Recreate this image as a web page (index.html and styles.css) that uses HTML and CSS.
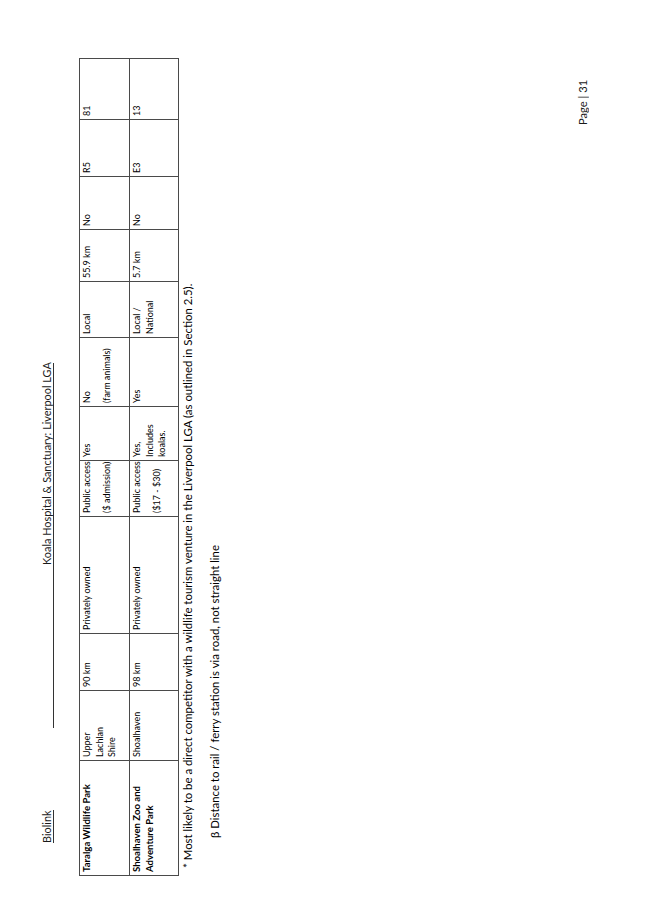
FILE: index.html
```html
<!DOCTYPE html>
<html lang="en">
<head>
<meta charset="utf-8">
<title>Biolink – Page 31</title>
<link rel="stylesheet" href="styles.css">
</head>
<body>
<div class="page">
  <header class="hdr">
    <span class="hdr-left">Biolink</span>
    <span class="hdr-right"><span class="hdr-title">Koala Hospital &amp; Sanctuary: Liverpool LGA</span></span>
  </header>

  <table class="comp">
    <colgroup>
      <col class="c1"><col class="c2"><col class="c3"><col class="c4"><col class="c5"><col class="c6">
      <col class="c7"><col class="c8"><col class="c9"><col class="c10"><col class="c11"><col class="c12">
    </colgroup>
    <tr class="r1">
      <td class="name">Taralga Wildlife Park</td>
      <td>Upper<br>Lachlan<br>Shire</td>
      <td>90 km</td>
      <td>Privately owned</td>
      <td><div>Public access</div><div class="para">($ admission)</div></td>
      <td>Yes</td>
      <td><div>No</div><div class="para">(farm animals)</div></td>
      <td>Local</td>
      <td>55.9 km</td>
      <td>No</td>
      <td>R5</td>
      <td>81</td>
    </tr>
    <tr class="r2">
      <td class="name">Shoalhaven Zoo and<br>Adventure Park</td>
      <td>Shoalhaven</td>
      <td>98 km</td>
      <td>Privately owned</td>
      <td><div>Public access</div><div class="para">($17 - $30)</div></td>
      <td>Yes,<br>Includes<br>koalas.</td>
      <td>Yes</td>
      <td>Local /<br>National</td>
      <td>5.7 km</td>
      <td>No</td>
      <td>E3</td>
      <td>13</td>
    </tr>
  </table>

  <p class="fn fn1">* Most likely to be a direct competitor with a wildlife tourism venture in the Liverpool LGA (as outlined in Section 2.5).</p>
  <p class="fn fn2">β Distance to rail / ferry station is via road, not straight line</p>

  <footer class="pageno">Page | 31</footer>
</div>
</body>
</html>
```

FILE: styles.css
```css
html, body {
  margin: 0;
  padding: 0;
  background: #ffffff;
}

body {
  width: 653px;
  height: 923px;
  overflow: hidden;
  font-family: Lato, "Open Sans", "Liberation Sans", sans-serif;
  color: #000000;
}

/* Landscape page set sideways: text runs bottom-to-top, lines stack left-to-right */
.page {
  width: 653px;
  height: 923px;
  box-sizing: border-box;
  writing-mode: vertical-rl;
  text-orientation: sideways;
  transform: rotate(180deg);
  padding-block: 41px 64px;
  display: flex;
  flex-direction: column;
}

.hdr {
  display: flex;
  margin-inline-start: 80px;
  font-size: 10.9px;
  line-height: 11px;
  color: #1a1a1a;
}

.hdr-left {
  border-block-end: 1px solid #333333;
  padding-block-end: 1px;
}

.hdr-right {
  margin-inline-start: 82px;
  padding-inline-start: 163px;
  border-block-end: 1px solid #333333;
  padding-block-end: 1px;
}

.comp {
  margin-block-start: 25px;
  margin-inline-start: 47px;
  inline-size: 817px;
  table-layout: fixed;
  border-collapse: collapse;
  border: 1px solid #333333;
  font-size: 9px;
  line-height: 12.5px;
}

.comp td {
  border: 1px solid #4a4a4a;
  padding-block: 1px 0;
  padding-inline: 3px 0;
  vertical-align: top;
  white-space: nowrap;
  overflow: hidden;
}

.r1 { block-size: 50px; }
.r2 { block-size: 49px; }

.name {
  font-weight: 700;
  font-size: 9.6px;
}

.para { margin-block-start: 7.5px; }

.c1 { inline-size: 115px; }
.c2 { inline-size: 70px; }
.c3 { inline-size: 57px; }
.c4 { inline-size: 117px; }
.c5 { inline-size: 56px; }
.c6 { inline-size: 54px; }
.c7 { inline-size: 69px; }
.c8 { inline-size: 56px; }
.c9 { inline-size: 52px; }
.c10 { inline-size: 53px; }
.c11 { inline-size: 57px; }
.c12 { inline-size: 61px; }

.fn {
  margin: 0;
  font-size: 11.4px;
  line-height: 14px;
}

.fn1 {
  margin-block-start: 2px;
  margin-inline-start: 55px;
}

.fn2 {
  margin-block-start: 13px;
  margin-inline-start: 85px;
}

.pageno {
  margin-block-start: auto;
  align-self: flex-end;
  margin-inline-end: 80px;
  font-size: 11.2px;
  line-height: 12px;
  color: #1a1a1a;
}
```
